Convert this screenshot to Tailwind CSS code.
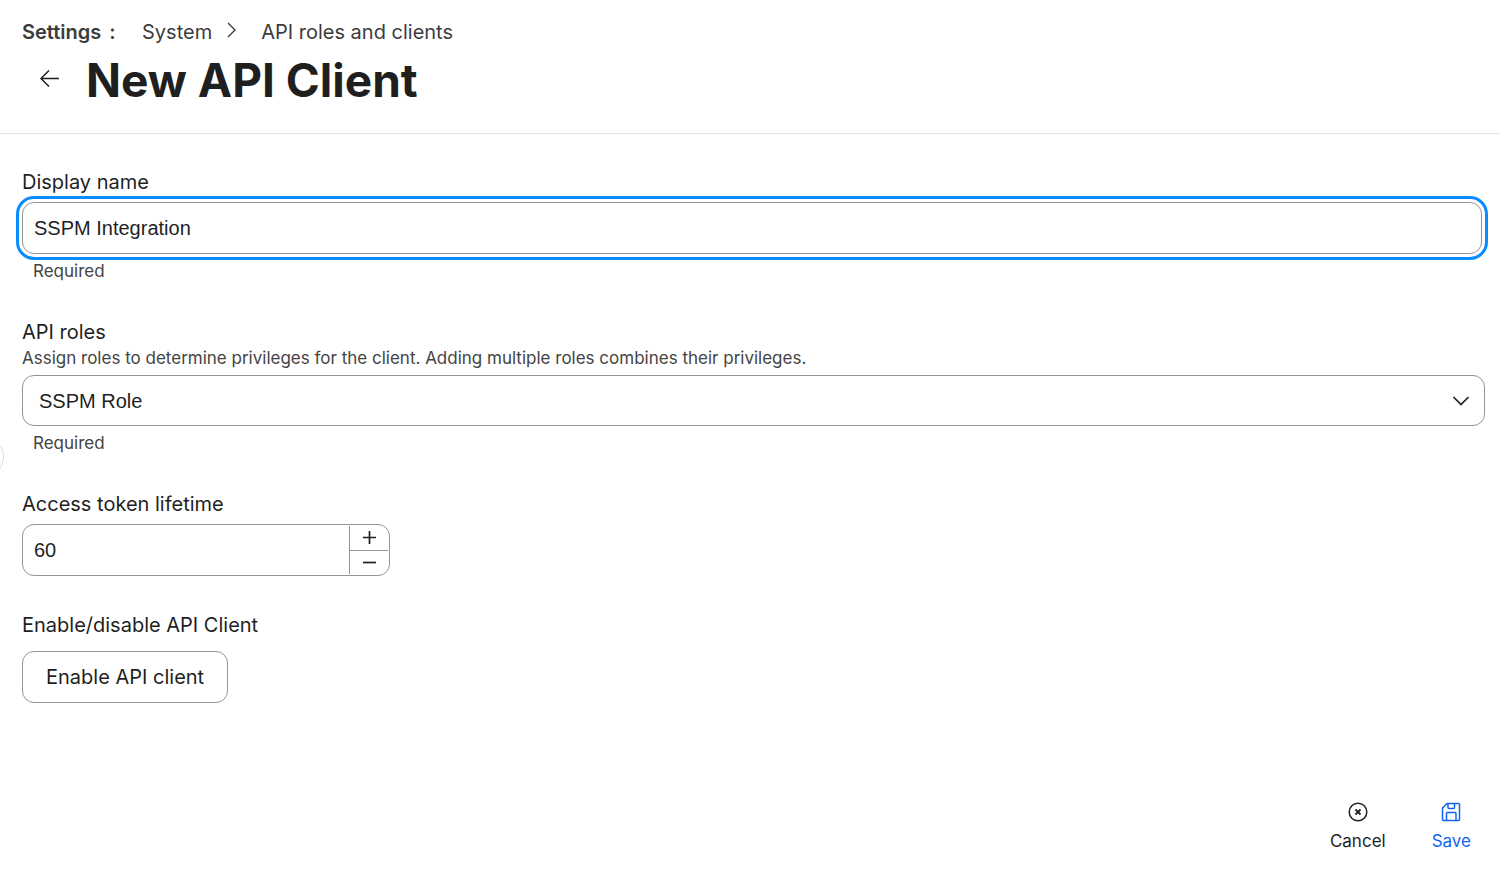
<!DOCTYPE html>
<html lang="en">
  <head>
    <meta charset="UTF-8" />
    <meta name="viewport" content="width=device-width, initial-scale=1.0" />
    <title>New API Client</title>
    <script src="https://cdn.jsdelivr.net/npm/@tailwindcss/browser@4"></script>
  </head>
  <body
    class="relative flex min-h-screen flex-col overflow-x-hidden bg-white font-['Inter',sans-serif] text-[20px] leading-6 text-[#1f1f1f]"
  >
    <header class="border-b border-[#e4e4e4] px-[22px] pt-5 pb-[25px]">
      <nav aria-label="Breadcrumb" class="flex items-center text-[#3c3c3c]">
        <span class="flex w-[120px] gap-2 font-semibold">
          <span>Settings</span>
          <span>:</span>
        </span>
        <a href="#system">System</a>
        <svg
          class="mx-3 mb-1 h-4 w-4"
          viewBox="0 0 16 16"
          fill="none"
          stroke="currentColor"
          stroke-width="1.4"
        >
          <path d="M4 1l7 7-7 7" />
        </svg>
        <a href="#clients" class="ml-[9px]">API roles and clients</a>
      </nav>
      <div class="mt-2 flex items-center">
        <button type="button" aria-label="Back" class="mr-6 mb-1 ml-4">
          <svg
            class="h-6 w-6"
            viewBox="0 0 24 24"
            fill="none"
            stroke="currentColor"
            stroke-width="1.5"
          >
            <path d="M21 12.500H3M11 4.500l-8 8 8 8" />
          </svg>
        </button>
        <h1 class="text-[46px] leading-14 font-bold">New API Client</h1>
      </div>
    </header>

    <!-- Side panel handle -->
    <button
      type="button"
      aria-label="Expand panel"
      class="absolute top-[437px] -left-9 h-10 w-10 rounded-full border border-[#dcdcdc]"
    ></button>

    <form class="flex grow flex-col">
      <div class="flex grow flex-col gap-[37px] px-[22px] pt-9">
        <div class="-mr-1 flex flex-col">
          <label for="displayName">Display name</label>
          <input
            id="displayName"
            type="text"
            value="SSPM Integration"
            class="mt-2 h-[52px] rounded-xl border border-[#949494] px-[11px] font-['Liberation_Sans',sans-serif] outline-3 outline-offset-3 outline-[#0a8cff]"
          />
          <p class="mt-[5px] ml-[11px] text-[17px] text-[#444]">Required</p>
        </div>

        <div class="-mr-[7px] flex flex-col">
          <label for="apiRoles">API roles</label>
          <p class="mt-0.5 text-[17px] text-[#444]">
            Assign roles to determine privileges for the client. Adding multiple
            roles combines their privileges.
          </p>
          <div class="relative mt-[5px] flex">
            <select
              id="apiRoles"
              class="h-[51px] w-full appearance-none rounded-xl border border-[#949494] px-4 font-['Liberation_Sans',sans-serif]"
            >
              <option>SSPM Role</option>
            </select>
            <svg
              class="pointer-events-none absolute top-[17px] right-[15px] h-[18px] w-[18px]"
              viewBox="0 0 18 18"
              fill="none"
              stroke="currentColor"
              stroke-width="1.7"
            >
              <path d="M1.500 5l7.500 7.500L16.500 5" />
            </svg>
          </div>
          <p class="mt-[5px] ml-[11px] text-[17px] text-[#444]">Required</p>
        </div>

        <div class="flex flex-col">
          <label for="tokenLifetime">Access token lifetime</label>
          <div
            class="mt-2 flex h-[52px] w-[368px] rounded-xl border border-[#949494] p-px"
          >
            <input
              id="tokenLifetime"
              type="text"
              inputmode="numeric"
              value="60"
              class="min-w-0 grow px-[10px] font-['Liberation_Sans',sans-serif] outline-none"
            />
            <div
              class="flex w-[39px] shrink-0 flex-col divide-y divide-[#949494] border-l border-[#949494]"
            >
              <button
                type="button"
                aria-label="Increase"
                onclick="stepLifetime(1)"
                class="flex grow items-center justify-center"
              >
                <svg
                  class="h-[13px] w-[13px]"
                  viewBox="0 0 13 13"
                  stroke="currentColor"
                  stroke-width="1.7"
                >
                  <path d="M0 6.500h13M6.500 0v13" />
                </svg>
              </button>
              <button
                type="button"
                aria-label="Decrease"
                onclick="stepLifetime(-1)"
                class="flex grow items-center justify-center"
              >
                <svg
                  class="h-[13px] w-[13px]"
                  viewBox="0 0 13 13"
                  stroke="currentColor"
                  stroke-width="1.7"
                >
                  <path d="M0 6.500h13" />
                </svg>
              </button>
            </div>
          </div>
        </div>

        <div class="flex flex-col items-start">
          <span id="enableLabel">Enable/disable API Client</span>
          <button
            type="button"
            aria-describedby="enableLabel"
            class="mt-[14px] h-[52px] rounded-xl border border-[#949494] px-[23px]"
          >
            Enable API client
          </button>
        </div>
      </div>

      <footer class="flex justify-end gap-[46px] pr-[29px] pb-[19px] text-[17px]">
        <button type="button" class="flex flex-col items-center gap-[7px]">
          <svg
            class="h-5 w-5"
            viewBox="0 0 20 20"
            fill="none"
            stroke="currentColor"
            stroke-width="1.5"
          >
            <circle cx="10" cy="10" r="8.8" />
            <path d="M7.500 7.500l5 5M12.500 7.500l-5 5" stroke-width="1.8" />
          </svg>
          Cancel
        </button>
        <button
          type="submit"
          class="flex flex-col items-center gap-[7px] text-[#1264f0]"
        >
          <svg
            class="h-5 w-5"
            viewBox="0 0 20 20"
            fill="none"
            stroke="currentColor"
            stroke-width="1.5"
            stroke-linejoin="round"
          >
            <path d="M6 1.500h11.500a1 1 0 0 1 1 1v15a1 1 0 0 1-1 1h-15a1 1 0 0 1-1-1V6z" />
            <path d="M7 1.500v4a1 1 0 0 0 1 1h4.500a1 1 0 0 0 1-1v-4" />
            <path d="M5.500 18.500v-7a1 1 0 0 1 1-1h7.500a1 1 0 0 1 1 1v7" />
          </svg>
          Save
        </button>
      </footer>
    </form>

    <script>
      const lifetime = document.getElementById("tokenLifetime");

      function stepLifetime(amount) {
        lifetime.value = Math.max(0, Number(lifetime.value) + amount);
      }
    </script>
  </body>
</html>
